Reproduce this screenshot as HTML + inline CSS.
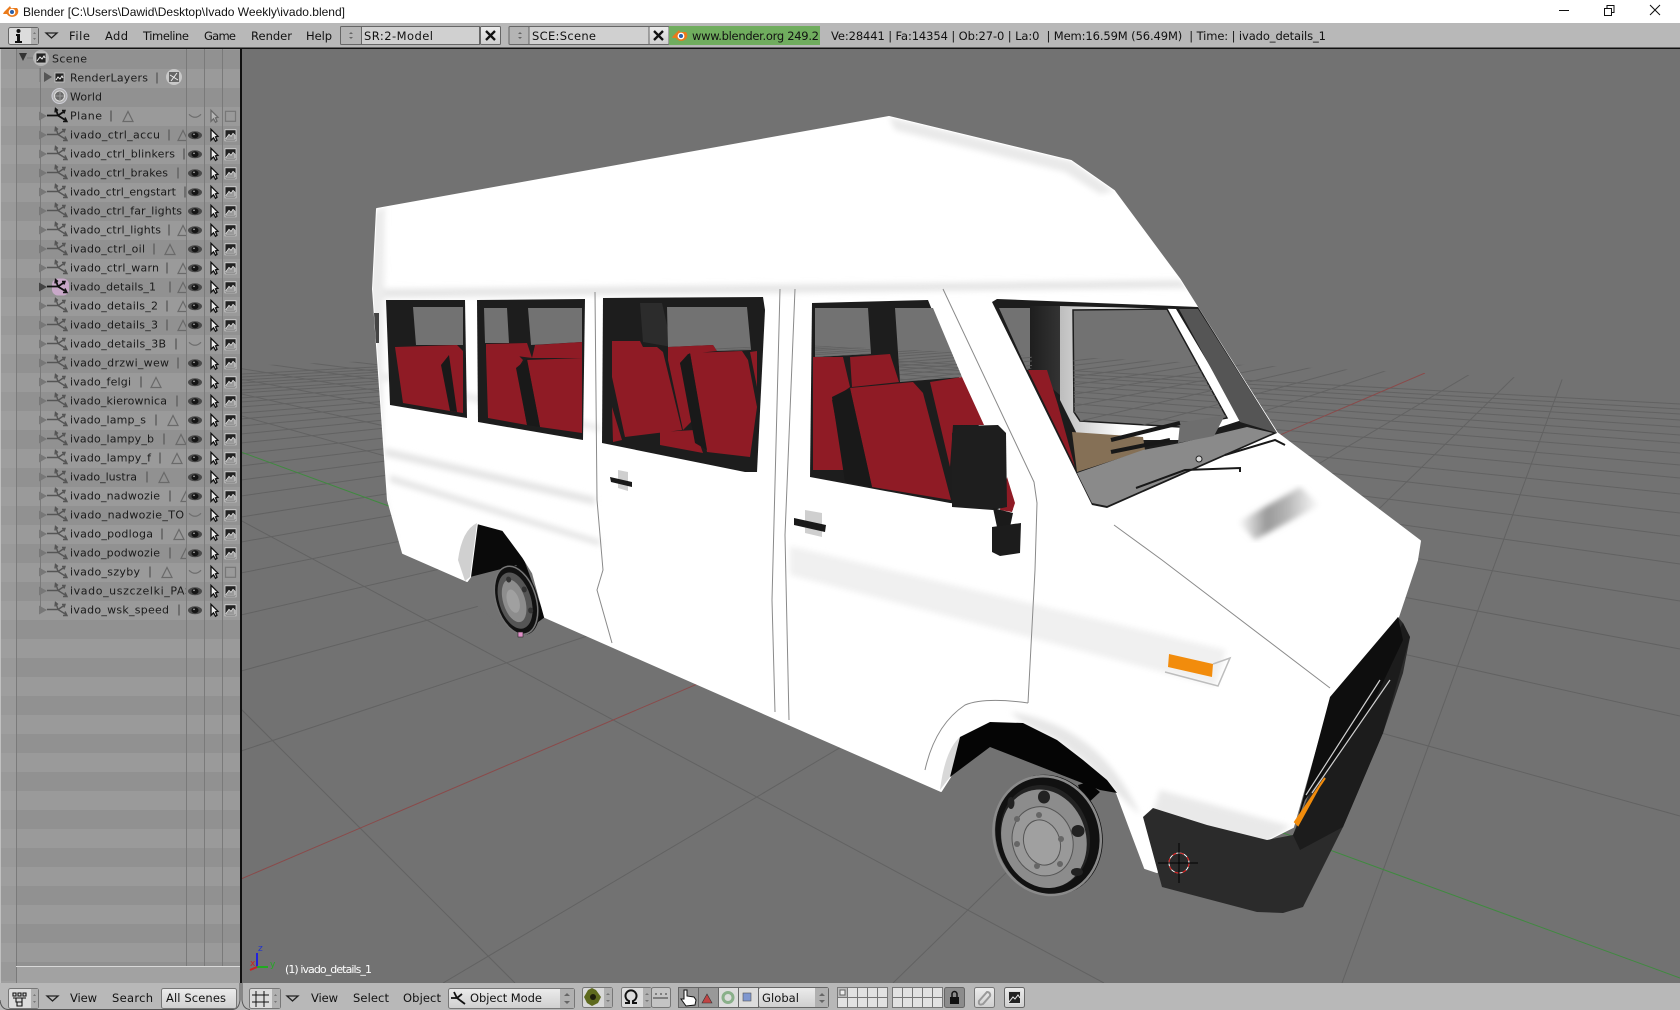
<!DOCTYPE html>
<html><head><meta charset="utf-8"><title>Blender</title>
<style>
html,body{margin:0;padding:0;background:#727272;width:1680px;height:1010px;overflow:hidden}
svg{display:block}
text{font-family:"DejaVu Sans","Liberation Sans",sans-serif;font-size:11px;fill:#111;white-space:pre}
.n text{fill:#1a1a1a}
.h text{font-size:11.5px;fill:#111}
</style></head><body>
<svg xmlns="http://www.w3.org/2000/svg" width="1680" height="1010" viewBox="0 0 1680 1010">
<defs>
<clipPath id="vp"><rect x="242" y="49" width="1438" height="934"/></clipPath>
<clipPath id="floor"><path d="M241,366 L800,345 L1425,373 L1680,385 L1680,983 L241,983Z"/></clipPath>
<clipPath id="names"><rect x="0" y="50" width="186" height="600"/></clipPath>
<clipPath id="bodyc"><path d="M377,209 L889,117 L1071,161 L1114,191 L1180,280 L1197,307 L1277,433 L1420,541 L1417,560 L1398,617 L1330,697 L1293,827 L1267,840 L1207,825 L1153,808 L1143,817 L1157,872 L1145,868 L1130,828 L1117,793 L1083,760 L1057,740 L1023,723 L990,722 L960,737 L950,777 L941,791 L545,617 L533,573 L523,557 L503,530 L477,523 L470,577 L467,581 L403,553 L388,500 L373,289Z"/></clipPath>
<clipPath id="glass"><path d="M815,308 L868,308 L871,354 L815,357Z M895,308 L933,308 L962,377 L900,382Z M999,308 L1030,308 L1032,368 L1027,370Z M1073,310 L1167,309 L1227,418 L1180,427 L1080,421 L1074,412Z M667,307 L747,307 L751,350 L717,351 L713,345 L668,347Z"/></clipPath>
<filter id="b" x="-5%" y="-5%" width="110%" height="110%"><feGaussianBlur stdDeviation="3"/></filter>
<pattern id="rows" x="0" y="50" width="10" height="38" patternUnits="userSpaceOnUse"><rect width="10" height="19" fill="#919191"/><rect y="19" width="10" height="19" fill="#9a9a9a"/></pattern>
<linearGradient id="pil" x1="0" x2="1" y1="0" y2="0"><stop offset="0" stop-color="#1e1e1e"/><stop offset="1" stop-color="#333"/></linearGradient>
<linearGradient id="wall" x1="0" x2="1" y1="0" y2="0"><stop offset="0" stop-color="#bdbdbd"/><stop offset=".35" stop-color="#fff"/></linearGradient>
<linearGradient id="smear" x1="0" x2="1" y1="0" y2="0"><stop offset="0" stop-color="#fff"/><stop offset=".35" stop-color="#999"/><stop offset=".6" stop-color="#b5b5b5"/><stop offset="1" stop-color="#fff"/></linearGradient>
<linearGradient id="btn" x1="0" y1="0" x2="0" y2="1"><stop offset="0" stop-color="#ececec"/><stop offset="1" stop-color="#cfcfcf"/></linearGradient>
<g id="ob" fill="none" stroke="#555" stroke-width="1.400"><path d="M56,3 L58,9 L66,14 M58,9 L64,5 M58,9 H47"/><path d="M55,6 L55.500,2 L58,4 M62,4 L65,4 L64,7 M63,15 L67,15 L65,11"/></g>
<g id="ob2" fill="none" stroke="#111" stroke-width="1.800"><path d="M56,3 L58,9 L66,14 M58,9 L64,5 M58,9 H47"/><path d="M55,6 L55.500,2 L58,4 M62,4 L65,4 L64,7 M63,15 L67,15 L65,11" stroke-width="1.400"/></g>
<path id="exp" d="M39,5 L47,9.500 L39,14Z" fill="#777"/>
<g id="eye"><ellipse cx="195" cy="10" rx="7" ry="4" fill="#4a4a4a"/><ellipse cx="195" cy="10" rx="3.500" ry="3" fill="#151515"/><circle cx="194" cy="9" r=".8" fill="#bbb"/></g>
<path id="eyeoff" d="M189,8 Q195,14 201,8" fill="none" stroke="#6e6e6e" stroke-width="1.200"/>
<path id="cur" d="M211,4 L211,15 L213.500,12.500 L215.500,16 L217,15 L215.500,11.500 L218,11Z" fill="#eee" stroke="#111" stroke-width="1.300"/>
<g id="rnd"><rect x="225" y="4.500" width="11" height="11" fill="#222" stroke="#ddd" stroke-width=".8"/><path d="M226,13 L229,9 L231,11 L233,8 L235,10 V14 H226Z" fill="#999" stroke="#eee" stroke-width=".7"/></g>
<rect id="rndoff" x="225.500" y="5" width="10" height="10" fill="none" stroke="#777" stroke-width="1.200"/>
<path id="tri" d="M0,15 L5,5 L10,15Z" fill="none" stroke="#6a6a6a" stroke-width="1.200"/>
<g id="logo"><path d="M-7,1 L-1,-5 L0,-3 L6,-3 A6,5.500 0 1 1 -4,3 L-8,3Z" fill="#ea7a1a"/><circle cx="1" cy="1" r="3.400" fill="#fff"/><circle cx="1" cy="1" r="2" fill="#2a5fa8"/></g>
<g id="grid"><g clip-path="url(#floor)" stroke="#626262" stroke-width="1" fill="none">
<path d="M1342,983L1590,303M893,983L1590,303M443,983L1590,303M241,751L1590,303M241,671L1590,303M241,615L1590,303M241,573L1590,303M241,542L1590,303M241,517L1590,303M241,496L1590,303M241,480L1590,303M241,466L1590,303M241,454L1590,303M241,443L1590,303M241,434L1590,303M241,426L1590,303M241,419L1590,303M241,413L1590,303M241,407L1590,303M241,402L1590,303M241,398L1590,303M241,393L1590,303M241,390L1590,303M241,386L1590,303M241,383L1590,303M241,380L1590,303M241,377L1590,303M241,374L1590,303"/>
<path d="M-165,303L515,983M-165,303L1104,983M-165,303L1680,816M-165,303L1680,716M-165,303L1680,649M-165,303L1680,601M-165,303L1680,564M-165,303L1680,536M-165,303L1680,513M-165,303L1680,494M-165,303L1680,478M-165,303L1680,465M-165,303L1680,453M-165,303L1680,443M-165,303L1680,435M-165,303L1680,427M-165,303L1680,420M-165,303L1680,414M-165,303L1680,409M-165,303L1680,404"/>
<path d="M241,879L1425,373" stroke="#8a4a4a"/>
<path d="M241,452L1680,978" stroke="#3f8a3f"/>
</g></g>
</defs>

<!-- title bar -->
<rect width="1680" height="23" fill="#fff"/>
<use href="#logo" x="11" y="11"/>
<text x="23" y="16" textLength="322" style="font-family:'Liberation Sans',sans-serif;font-size:12px">Blender [C:\Users\Dawid\Desktop\Ivado Weekly\ivado.blend]</text>
<path d="M1559,10.500 H1569" stroke="#111"/>
<path d="M1604.500,8.500 H1611.500 V15.500 H1604.500Z M1607,8 V5.500 H1614 V12.500 H1612" fill="none" stroke="#111"/>
<path d="M1650,5 L1660,15 M1660,5 L1650,15" stroke="#111"/>

<!-- viewport -->
<rect x="241" y="49" width="1439" height="934" fill="#727272"/>
<g clip-path="url(#vp)"><use href="#grid"/></g>

<!-- rear wheel + arch -->
<path d="M477,523 L503,530 L523,557 L545,617 L530,628 L510,620 L490,590 L470,577Z" fill="#0a0a0a"/>
<path d="M470,577 L517,565 L497,590 L500,625 L470,600Z" fill="#727272"/>
<g transform="translate(517,600) rotate(-17)"><ellipse rx="21" ry="36" fill="#111"/><ellipse cx="-1" rx="20" ry="35" fill="none" stroke="#777" stroke-width="1.500"/><ellipse cx="-2" rx="16" ry="29" fill="#555"/><ellipse cx="-3" rx="11" ry="22" fill="#8d8d8d"/><ellipse cx="-4" rx="6" ry="12" fill="#a0a0a0"/><ellipse cx="-2" cy="-22" rx="2.500" ry="3" fill="#333"/><ellipse cx="10" cy="-8" rx="2.500" ry="3" fill="#333"/><ellipse cx="10" cy="14" rx="2.500" ry="3" fill="#333"/></g>
<rect x="518" y="632" width="5" height="5" fill="#e090c8" stroke="#222" stroke-width=".6"/>

<!-- van body -->
<path d="M377,209 L889,117 L1071,161 L1114,191 L1180,280 L1197,307 L1277,433 L1420,541 L1417,560 L1398,617 L1330,697 L1293,827 L1267,840 L1207,825 L1153,808 L1143,817 L1157,872 L1145,868 L1130,828 L1117,793 L1083,760 L1057,740 L1023,723 L990,722 L960,737 L950,777 L941,791 L545,617 L533,573 L523,557 L503,530 L477,523 L470,577 L467,581 L403,553 L388,500 L373,289Z" fill="#fff" stroke="#fff" stroke-width="2" stroke-linejoin="round"/>

<!-- soft shading -->
<g clip-path="url(#bodyc)"><g filter="url(#b)">
<path d="M889,117 L1071,161 L1114,191 L1100,194 L1065,172 L895,130Z" fill="#e9e9e9"/>
<path d="M373,289 L1180,280 L1190,288 L374,298Z" fill="#e6e6e6"/>
<path d="M373,370 L600,425 L600,432 L373,378Z" fill="#ececec"/>
<path d="M385,448 L595,497 L595,505 L385,456Z M390,475 L600,540 L600,546 L390,482Z" fill="#e4e4e4"/>
<path d="M790,546 L1226,650 L1216,686 L790,575Z" fill="#f0f0f0"/>
<path d="M1010,712 Q1100,725 1140,815 L1117,793 L1083,760 L1057,740 L1023,723Z" fill="#e6e6e6"/>
<path d="M1160,790 L1290,826 L1267,845 L1207,830 L1153,812Z" fill="#e9e9e9"/>
<path d="M365,220 L385,205 L382,480 L395,540 L372,500Z" fill="#ececec"/>
</g></g>

<!-- grey seam lines -->
<g fill="none" stroke="#8a8a8a" stroke-width="1">
<path d="M595,292 L597,500 L603,570 L597,590 L612,643"/>
<path d="M780,289 L772,600 L775,712"/>
<path d="M795,289 L785,535 L789,720"/>
<path d="M943,289 L1034,482 L1037,503 L1035,570 L1028,703"/>
<path d="M1028,703 Q985,697 965,705 Q935,725 925,770"/>
<path d="M1114,525 L1162,560 L1330,688"/>
</g>
<!-- arch strips -->
<path d="M477,523 Q462,530 458,560 L465,581 L470,577Z" fill="#d0d0d0"/>
<path d="M960,737 Q945,750 940,790 L950,777Z" fill="#d8d8d8"/>
<path d="M374,313 H379 V343 H376Z" fill="#444"/>
<!-- hood smear -->
<path d="M1238,522 L1300,487 L1320,505 L1255,540Z" fill="url(#smear)" filter="url(#b)"/>

<!-- window 1 -->
<path d="M386,300 L465,300 L467,418 L390,405Z" fill="#1d1d1d"/>
<path d="M413,307 L463,307 L463,345 L416,345Z" fill="#727272"/>
<path d="M395,347 L457,345 L463,351 L463,413 L450,411 L403,403Z" fill="#8f1b25"/>
<path d="M441,365 L449,355 L457,412 L450,411Z" fill="#191919"/>
<!-- window 2 -->
<path d="M477,300 L585,299 L583,440 L478,422Z" fill="#1d1d1d"/>
<path d="M484,308 L507,308 L509,343 L485,343Z M528,308 L582,308 L582,342 L531,345Z" fill="#727272"/>
<path d="M486,344 L527,343 L532,358 L486,352Z M535,345 L582,342 L582,358 L532,358Z M486,352 L515,352 L523,360 L517,370 L527,425 L488,418Z M527,360 L582,358 L582,433 L540,427Z" fill="#8f1b25"/>
<path d="M516,368 L527,359 L540,427 L527,425Z" fill="#191919"/>
<!-- window 3 -->
<path d="M603,298 L763,297 L765,310 L757,472 L745,472 L602,443Z" fill="#1d1d1d"/>
<path d="M640,303 L662,303 L672,347 L643,342Z" fill="#2c2c2c"/>
<path d="M667,307 L747,307 L751,350 L717,351 L713,345 L668,347Z" fill="#727272"/>
<path d="M612,341 L640,341 L643,347 L657,347 L663,352 L682,430 L625,437 L612,377Z M612,407 L622,440 L613,442Z M668,347 L713,345 L717,351 L688,354 L680,363 L693,420 L683,430 L668,360Z M690,353 L742,351 L748,360 L757,407 L750,457 L707,452Z M750,352 L757,351 L757,387Z M660,432 L695,430 L703,453 L660,445Z" fill="#8f1b25"/>
<path d="M680,363 L690,353 L707,450 L695,443Z" fill="#191919"/>
<!-- window 4 -->
<path d="M812,303 L928,300 L1013,510 L950,503 L810,477Z" fill="#1d1d1d"/>
<path d="M815,308 L868,308 L871,354 L815,357Z M895,308 L933,308 L962,377 L900,382Z" fill="#727272"/>
<path d="M813,357 L843,357 L850,387 L832,400 L845,470 L813,470Z M850,357 L890,354 L899,382 L852,387Z M850,388 L913,382 L923,393 L951,500 L872,487Z M930,382 L962,377 L984,425 L953,425 L950,467Z" fill="#8f1b25"/>
<path d="M832,397 L850,388 L872,487 L845,482Z" fill="#191919"/>
<!-- mirror -->
<path d="M1007,477 L1015,503 L1012,512 L1000,510Z" fill="#8f1b25"/>
<path d="M952,433 L960,426 L998,425 L1006,433 L1007,507 L993,510 L952,507Z" fill="#1e1e1e"/>
<path d="M993,508 L1013,513 L1010,527 L997,527Z" fill="#1a1a1a"/>
<path d="M992,527 L1021,523 L1020,553 L1000,556 L992,552Z" fill="#1c1c1c"/>
<!-- handles -->
<path d="M805,510 L822,513 L822,537 L805,533Z M618,470 L628,472 L628,491 L618,488Z" fill="#cfcfcf"/>
<path d="M794,518 L826,525 L825,532 L794,525Z M610,477 L632,482 L632,487 L611,482Z" fill="#1a1a1a"/>

<!-- windshield -->
<path d="M992,302 L997,299 L1198,307 L1277,433 L1107,508 L1092,505Z" fill="#1c1c1c"/>
<path d="M999,308 L1030,308 L1032,368 L1027,370Z" fill="#727272"/>
<path d="M1030,306 L1060,306 L1060,395 L1030,370Z" fill="url(#pil)"/>
<path d="M1060,306 L1176,309 L1242,420 L1180,440 L1080,440 L1060,400Z" fill="url(#wall)"/>
<path d="M1073,310 L1167,309 L1227,418 L1180,427 L1080,421 L1074,412Z" fill="#727272" stroke="#1c1c1c" stroke-width="1.500"/>
<path d="M1179,309 L1198,309 L1277,433 L1240,422Z" fill="#555"/>
<g clip-path="url(#glass)"><use href="#grid"/></g>
<path d="M1028,370 L1047,370 L1058,405 L1075,467Z" fill="#8f1b25"/>
<path d="M1072,432 L1143,437 L1145,450 L1077,472Z" fill="#857056"/>
<path d="M1077,473 L1143,450 L1180,443 L1247,427 L1273,433 L1107,506 L1092,503Z" fill="#8a8a8a"/>
<path d="M1180,423 L1225,415 L1214,436 L1178,443Z" fill="#6e6e6e"/>
<path d="M1111,440 L1180,423 M1111,452 L1170,440" stroke="#181818" stroke-width="4" fill="none"/>
<path d="M1136,488 L1185,470 L1240,468 L1240,472 M1225,455 L1275,440 L1285,445" stroke="#181818" stroke-width="2" fill="none"/>
<circle cx="1199" cy="459" r="3" fill="#ddd" stroke="#222"/>

<!-- orange lamp -->
<path d="M1169,654 L1213,664 L1212,677 L1168,667Z" fill="#f28c0c"/>
<path d="M1213,664 L1230,658 L1218,686 L1165,672" fill="none" stroke="#bdbdbd" stroke-width="1.500"/>

<!-- bumper + grille -->
<path d="M1143,817 L1153,808 L1207,825 L1267,840 L1293,835 L1330,740 L1398,617 L1403,623 L1410,637 L1403,673 L1383,733 L1343,827 L1303,907 L1283,913 L1257,912 L1162,887Z" fill="#2b2b2b"/>
<path d="M1293,835 L1300,850 L1343,827 L1383,733 L1410,637 L1403,623 L1380,660Z" fill="#1c1c1c"/>
<path d="M1330,697 L1398,617 L1403,640 L1370,710 L1305,800 L1296,825Z" fill="#0e0e0e"/>
<path d="M1306,795 L1380,680 M1312,793 L1390,680" stroke="#d0d0d0" stroke-width="1.200" fill="none"/>
<path d="M1295,822 L1325,778 L1320,785 L1298,825Z" fill="#f28c0c" stroke="#f28c0c" stroke-width="2"/>

<!-- front wheel arch -->
<path d="M990,722 L1023,723 L1057,740 L1083,760 L1107,780 L1117,793 L1100,790 L990,747 L950,777 L960,737Z" fill="#050505"/>
<path d="M1078,785 L1088,782 L1100,792 L1085,806Z" fill="#050505"/>
<!-- front wheel -->
<g transform="translate(1049,835) rotate(-18)"><ellipse rx="53" ry="61" fill="#111"/><ellipse cx="-2" rx="53" ry="60" fill="none" stroke="#8a8a8a" stroke-width="2.500"/><ellipse cx="-4" rx="44" ry="52" fill="#222"/><ellipse cx="-6" cy="2" rx="42" ry="50" fill="#8c8c8c"/><ellipse cx="-8" cy="4" rx="30" ry="35" fill="#999" stroke="#555"/><ellipse cx="-9" cy="5" rx="18" ry="23" fill="#a0a0a0" stroke="#555"/></g>
<g fill="#222"><ellipse cx="1011" cy="803" rx="3.500" ry="6"/><ellipse cx="1044" cy="797" rx="6" ry="6.500"/><ellipse cx="1078" cy="831" rx="6.500" ry="6"/><ellipse cx="1077" cy="872" rx="6" ry="4"/></g>
<g fill="#666"><circle cx="1017" cy="819" r="3"/><circle cx="1039" cy="815" r="3"/><circle cx="1061" cy="839" r="3"/><circle cx="1060" cy="864" r="3"/><circle cx="1037" cy="866" r="3"/><circle cx="1017" cy="844" r="3"/></g>

<!-- 3D cursor -->
<g fill="none"><circle cx="1179" cy="863" r="10" stroke="#fff" stroke-width="1"/><circle cx="1179" cy="863" r="10" stroke="#d11" stroke-width="1" stroke-dasharray="4 4"/><path d="M1158,863 H1198 M1179,843 V883" stroke="#000"/></g>

<!-- axis widget + info -->
<path d="M257,967 V953" stroke="#2222dd" stroke-width="2"/>
<path d="M257,967 H268" stroke="#22aa22" stroke-width="2"/>
<path d="M257,967 L250,970" stroke="#c22" stroke-width="2"/>
<text x="258" y="951" style="fill:#2233cc;font-size:9px">z</text>
<text x="270" y="967" style="fill:#22aa22;font-size:9px">y</text>
<text x="250" y="966" style="fill:#c22;font-size:9px">x</text>
<text x="285" y="973" textLength="87" style="fill:#fff">(1) ivado_details_1</text>

<!-- sidebar -->
<rect x="0" y="49" width="240" height="934" fill="url(#rows)"/>
<rect x="0" y="49" width="16" height="934" fill="#a4a4a4" opacity=".4"/>
<rect x="16" y="966" width="224" height="17" fill="#a2a2a2"/>
<path d="M0,49 V983" stroke="#c0c0c0" stroke-width="2"/>
<path d="M16.500,49 V983 M40.500,68 V610 M186.500,49 V966 M204.500,49 V966 M222.500,49 V966" stroke="#7a7a7a" fill="none"/>
<path d="M16,966.500 H240" stroke="#d8d8d8"/>
<rect x="240" y="49" width="2" height="934" fill="#111"/>

<!-- outliner content -->
<g class="n" clip-path="url(#names)"><g transform="translate(0,-.5)">
<text x="52" y="63" textLength="35">Scene</text>
<text x="70" y="82" textLength="78">RenderLayers</text>
<text x="70" y="101" textLength="32">World</text>
<text x="70" y="120" textLength="32">Plane</text>
<text x="70" y="139" textLength="90">ivado_ctrl_accu</text>
<text x="70" y="158" textLength="105">ivado_ctrl_blinkers</text>
<text x="70" y="177" textLength="98">ivado_ctrl_brakes</text>
<text x="70" y="196" textLength="106">ivado_ctrl_engstart</text>
<text x="70" y="215" textLength="112">ivado_ctrl_far_lights</text>
<text x="70" y="234" textLength="91">ivado_ctrl_lights</text>
<text x="70" y="253" textLength="75">ivado_ctrl_oil</text>
<text x="70" y="272" textLength="89">ivado_ctrl_warn</text>
<text x="70" y="291" textLength="86">ivado_details_1</text>
<text x="70" y="310" textLength="88">ivado_details_2</text>
<text x="70" y="329" textLength="88">ivado_details_3</text>
<text x="70" y="348" textLength="96">ivado_details_3B</text>
<text x="70" y="367" textLength="99">ivado_drzwi_wew</text>
<text x="70" y="386" textLength="61">ivado_felgi</text>
<text x="70" y="405" textLength="97">ivado_kierownica</text>
<text x="70" y="424" textLength="76">ivado_lamp_s</text>
<text x="70" y="443" textLength="84">ivado_lampy_b</text>
<text x="70" y="462" textLength="81">ivado_lampy_f</text>
<text x="70" y="481" textLength="67">ivado_lustra</text>
<text x="70" y="500" textLength="90">ivado_nadwozie</text>
<text x="70" y="519" textLength="114">ivado_nadwozie_TO</text>
<text x="70" y="538" textLength="83">ivado_podloga</text>
<text x="70" y="557" textLength="90">ivado_podwozie</text>
<text x="70" y="576" textLength="70">ivado_szyby</text>
<text x="70" y="595" textLength="122">ivado_uszczelki_PAS</text>
<text x="70" y="614" textLength="99">ivado_wsk_speed</text>
<!-- separators -->
<g fill="#6f6f6f">
<rect x="156" y="73" width="2" height="11"/><rect x="110" y="111" width="2" height="11"/><rect x="168" y="130" width="2" height="11"/><rect x="183" y="149" width="2" height="11"/><rect x="177" y="168" width="2" height="11"/><rect x="184" y="187" width="2" height="11"/><rect x="168" y="225" width="2" height="11"/><rect x="153" y="244" width="2" height="11"/><rect x="166" y="263" width="2" height="11"/><rect x="169" y="282" width="2" height="11"/><rect x="166" y="301" width="2" height="11"/><rect x="166" y="320" width="2" height="11"/><rect x="175" y="339" width="2" height="11"/><rect x="177" y="358" width="2" height="11"/><rect x="140" y="377" width="2" height="11"/><rect x="176" y="396" width="2" height="11"/><rect x="155" y="415" width="2" height="11"/><rect x="163" y="434" width="2" height="11"/><rect x="159" y="453" width="2" height="11"/><rect x="146" y="472" width="2" height="11"/><rect x="169" y="491" width="2" height="11"/><rect x="161" y="529" width="2" height="11"/><rect x="169" y="548" width="2" height="11"/><rect x="149" y="567" width="2" height="11"/><rect x="178" y="605" width="2" height="11"/>
</g>
<use href="#tri" x="123" y="107"/><use href="#tri" x="178" y="126"/><use href="#tri" x="178" y="221"/><use href="#tri" x="165" y="240"/><use href="#tri" x="178" y="259"/><use href="#tri" x="178" y="278"/><use href="#tri" x="178" y="297"/><use href="#tri" x="178" y="316"/><use href="#tri" x="151" y="373"/><use href="#tri" x="168" y="411"/><use href="#tri" x="176" y="430"/><use href="#tri" x="172" y="449"/><use href="#tri" x="159" y="468"/><use href="#tri" x="181" y="487"/><use href="#tri" x="174" y="525"/><use href="#tri" x="181" y="544"/><use href="#tri" x="162" y="563"/>
</g></g>

<!-- scene / renderlayers / world icons -->
<path d="M19,53 L27,53 L23,61Z" fill="#333"/>
<path d="M27,58 H35 M40,68 V82" stroke="#777"/>
<circle cx="41" cy="58" r="8" fill="#b4b4b4"/>
<rect x="36" y="53" width="10" height="10" fill="#222" stroke="#ccc" stroke-width=".8"/>
<path d="M37,61 L40,57 L42,59 L44,56 L45,58" fill="none" stroke="#eee"/>
<path d="M44,72 L52,77 L44,82Z" fill="#555"/>
<rect x="55" y="73" width="9" height="9" fill="#222" stroke="#ccc" stroke-width=".8"/>
<path d="M56,80 L58,77 L60,79 L62,76 L63,78" fill="none" stroke="#eee"/>
<circle cx="174" cy="77" r="8" fill="#c8c8c8"/>
<rect x="169" y="72" width="10" height="10" fill="#666"/><path d="M170,75 L178,80 M177,73 L171,81" stroke="#eee"/>
<circle cx="59.500" cy="96" r="7.500" fill="#b0b0b0" stroke="#cfcfd8"/>
<circle cx="59.500" cy="96" r="5" fill="#6a6a6a" stroke="#ddd"/>
<path d="M55,96 H64 M60,91 V101" stroke="#999"/>

<!-- row object icons -->
<g transform="translate(0,-.5)">
<use href="#exp" y="107" style="fill:#444"/><use href="#ob2" y="107"/>
<use href="#exp" y="126"/><use href="#ob" y="126"/>
<use href="#exp" y="145"/><use href="#ob" y="145"/>
<use href="#exp" y="164"/><use href="#ob" y="164"/>
<use href="#exp" y="183"/><use href="#ob" y="183"/>
<use href="#exp" y="202"/><use href="#ob" y="202"/>
<use href="#exp" y="221"/><use href="#ob" y="221"/>
<use href="#exp" y="240"/><use href="#ob" y="240"/>
<use href="#exp" y="259"/><use href="#ob" y="259"/>
<path d="M39,283 L47,287.500 L39,292Z" fill="#444"/><rect x="52" y="279" width="17" height="17" rx="6" fill="#c8a8c8"/><use href="#ob2" y="278"/>
<use href="#exp" y="297"/><use href="#ob" y="297"/>
<use href="#exp" y="316"/><use href="#ob" y="316"/>
<use href="#exp" y="335"/><use href="#ob" y="335"/>
<use href="#exp" y="354"/><use href="#ob" y="354"/>
<use href="#exp" y="373"/><use href="#ob" y="373"/>
<use href="#exp" y="392"/><use href="#ob" y="392"/>
<use href="#exp" y="411"/><use href="#ob" y="411"/>
<use href="#exp" y="430"/><use href="#ob" y="430"/>
<use href="#exp" y="449"/><use href="#ob" y="449"/>
<use href="#exp" y="468"/><use href="#ob" y="468"/>
<use href="#exp" y="487"/><use href="#ob" y="487"/>
<use href="#exp" y="506"/><use href="#ob" y="506"/>
<use href="#exp" y="525"/><use href="#ob" y="525"/>
<use href="#exp" y="544"/><use href="#ob" y="544"/>
<use href="#exp" y="563"/><use href="#ob" y="563"/>
<use href="#exp" y="582"/><use href="#ob" y="582"/>
<use href="#exp" y="601"/><use href="#ob" y="601"/>
</g>

<!-- restrict columns -->
<g transform="translate(0,-.7)">
<use href="#eyeoff" y="107"/><g opacity=".35"><use href="#cur" y="107"/></g><use href="#rndoff" y="107"/>
<use href="#eye" y="126"/><use href="#cur" y="126"/><use href="#rnd" y="126"/>
<use href="#eye" y="145"/><use href="#cur" y="145"/><use href="#rnd" y="145"/>
<use href="#eye" y="164"/><use href="#cur" y="164"/><use href="#rnd" y="164"/>
<use href="#eye" y="183"/><use href="#cur" y="183"/><use href="#rnd" y="183"/>
<use href="#eye" y="202"/><use href="#cur" y="202"/><use href="#rnd" y="202"/>
<use href="#eye" y="221"/><use href="#cur" y="221"/><use href="#rnd" y="221"/>
<use href="#eye" y="240"/><use href="#cur" y="240"/><use href="#rnd" y="240"/>
<use href="#eye" y="259"/><use href="#cur" y="259"/><use href="#rnd" y="259"/>
<use href="#eye" y="278"/><use href="#cur" y="278"/><use href="#rnd" y="278"/>
<use href="#eye" y="297"/><use href="#cur" y="297"/><use href="#rnd" y="297"/>
<use href="#eye" y="316"/><use href="#cur" y="316"/><use href="#rnd" y="316"/>
<use href="#eyeoff" y="335"/><use href="#cur" y="335"/><use href="#rnd" y="335"/>
<use href="#eye" y="354"/><use href="#cur" y="354"/><use href="#rnd" y="354"/>
<use href="#eye" y="373"/><use href="#cur" y="373"/><use href="#rnd" y="373"/>
<use href="#eye" y="392"/><use href="#cur" y="392"/><use href="#rnd" y="392"/>
<use href="#eye" y="411"/><use href="#cur" y="411"/><use href="#rnd" y="411"/>
<use href="#eye" y="430"/><use href="#cur" y="430"/><use href="#rnd" y="430"/>
<use href="#eye" y="449"/><use href="#cur" y="449"/><use href="#rnd" y="449"/>
<use href="#eye" y="468"/><use href="#cur" y="468"/><use href="#rnd" y="468"/>
<use href="#eye" y="487"/><use href="#cur" y="487"/><use href="#rnd" y="487"/>
<use href="#eyeoff" y="506"/><use href="#cur" y="506"/><use href="#rnd" y="506"/>
<use href="#eye" y="525"/><use href="#cur" y="525"/><use href="#rnd" y="525"/>
<use href="#eye" y="544"/><use href="#cur" y="544"/><use href="#rnd" y="544"/>
<use href="#eyeoff" y="563"/><use href="#cur" y="563"/><use href="#rndoff" y="563"/>
<use href="#eye" y="582"/><use href="#cur" y="582"/><use href="#rnd" y="582"/>
<use href="#eye" y="601"/><use href="#cur" y="601"/><use href="#rnd" y="601"/>
</g>

<!-- top header -->
<rect x="0" y="23" width="1680" height="25" fill="#b8b8b8"/>
<rect x="0" y="47.500" width="1680" height="1.500" fill="#111"/>
<rect x="8.500" y="27.500" width="30" height="17" rx="2" fill="#dcdcdc" stroke="#666"/>
<rect x="31" y="28" width="7" height="16" fill="#b0b0b0"/>
<circle cx="18.500" cy="31" r="2" fill="#111"/><path d="M16,34 H20 V41 H22 V43 H15 V41 H17 V36 H16Z" fill="#111"/>
<path d="M33,34 L34.500,32 L36,34Z M33,38 L34.500,40 L36,38Z" fill="#777"/>
<path d="M46,33 L57,33 L51.500,38Z" fill="none" stroke="#222" stroke-width="1.300"/>
<g class="h">
<text x="69" y="40" textLength="21">File</text>
<text x="105" y="40" textLength="23">Add</text>
<text x="143" y="40" textLength="46">Timeline</text>
<text x="204" y="40" textLength="32">Game</text>
<text x="251" y="40" textLength="41">Render</text>
<text x="306" y="40" textLength="26">Help</text>
<rect x="340.500" y="26.500" width="21" height="18" rx="1" fill="#b4b4b4" stroke="#666"/>
<path d="M349,34 L351,32 L353,34Z M349,37 L351,39 L353,37Z" fill="#666"/>
<rect x="361.500" y="26.500" width="118" height="18" fill="#d0d0d0" stroke="#666"/>
<text x="364" y="40" textLength="69">SR:2-Model</text>
<rect x="480.500" y="26.500" width="20" height="18" rx="1" fill="url(#btn)" stroke="#666"/>
<path d="M486,31 L495,40 M495,31 L486,40" stroke="#111" stroke-width="2.300"/>
<rect x="509" y="26.500" width="20" height="18" rx="1" fill="#b4b4b4" stroke="#666"/>
<path d="M518,34 L520,32 L522,34Z M518,37 L520,39 L522,37Z" fill="#666"/>
<rect x="529" y="26.500" width="120" height="18" fill="#d0d0d0" stroke="#666"/>
<text x="532" y="40" textLength="64">SCE:Scene</text>
<rect x="649" y="26.500" width="20" height="18" rx="1" fill="url(#btn)" stroke="#666"/>
<path d="M654,31 L663,40 M663,31 L654,40" stroke="#111" stroke-width="2.300"/>
<rect x="669" y="26" width="151" height="19" fill="#70ad5e"/>
<use href="#logo" x="680" y="35"/>
<text x="692" y="40" textLength="127">www.blender.org 249.2</text>
<text x="831" y="40" textLength="495">Ve:28441 | Fa:14354 | Ob:27-0 | La:0  | Mem:16.59M (56.49M)  | Time: | ivado_details_1</text>
</g>

<!-- bottom header -->
<rect x="0" y="983" width="1680" height="27" fill="#b8b8b8"/>
<path d="M0,1000 Q1,1009 8,1009.500 H233 Q239,1009 240,1000 V983 M242,983 V1000 Q243,1009 250,1009.500" fill="none" stroke="#555"/>
<rect x="8.500" y="988.500" width="30" height="20" rx="2" fill="#dcdcdc" stroke="#777"/>
<rect x="31" y="989" width="7" height="19" fill="#b0b0b0"/>
<path d="M13,993 h3 v3 h-3Z M18,993 h3 v3 h-3Z M23,993 h3 v3 h-3Z M13,998 h13 M16,998 v4 h6 v-4 M17,1002 h5 v4 h-5Z" fill="none" stroke="#111" stroke-width="1.100"/>
<path d="M33,996 L34.500,994 L36,996Z M33,1001 L34.500,1003 L36,1001Z" fill="#777"/>
<path d="M47,996 L58,996 L52.500,1001Z" fill="none" stroke="#222" stroke-width="1.300"/>
<g class="h">
<text x="70" y="1002" textLength="27">View</text>
<text x="112" y="1002" textLength="41">Search</text>
<rect x="161.500" y="988.500" width="75" height="20" rx="2" fill="url(#btn)" stroke="#777"/>
<text x="166" y="1002" textLength="60">All Scenes</text>
<rect x="249.500" y="988.500" width="31" height="20" rx="2" fill="#dcdcdc" stroke="#777"/>
<rect x="272" y="989" width="8" height="19" fill="#b0b0b0"/>
<path d="M252,995 H269 M252,1002 H269 M256,991 V1007 M264,991 V1007" stroke="#111" stroke-width="1"/>
<path d="M274,996 L275.500,994 L277,996Z M274,1001 L275.500,1003 L277,1001Z" fill="#777"/>
<path d="M287,996 L298,996 L292.500,1001Z" fill="none" stroke="#222" stroke-width="1.300"/>
<text x="311" y="1002" textLength="27">View</text>
<text x="353" y="1002" textLength="36">Select</text>
<text x="403" y="1002" textLength="38">Object</text>
<rect x="448.500" y="988.500" width="126" height="20" rx="2" fill="url(#btn)" stroke="#777"/>
<rect x="560" y="989" width="14" height="19" fill="#b0b0b0"/>
<path d="M564,996 L567,993 L570,996Z M564,1001 L567,1004 L570,1001Z" fill="#666"/>
<path d="M454,992 L457,998 L465,1004 M457,998 L462,994 M457,998 H451" fill="none" stroke="#111" stroke-width="1.800"/>
<text x="470" y="1002" textLength="72">Object Mode</text>
<!-- shading button -->
<rect x="582.500" y="987.500" width="30" height="20" rx="2" fill="#d8d8d8" stroke="#777"/>
<rect x="604" y="988" width="8" height="19" fill="#b0b0b0"/>
<path d="M592,988 L596,990 L601,997 L598,1003 L592,1006 L587,1003 L584,997 L588,990Z" fill="#5e6a1e"/><circle cx="593" cy="997" r="3" fill="#1d1d0c"/>
<path d="M606,995 L608,993 L610,995Z M606,1000 L608,1002 L610,1000Z" fill="#777"/>
<!-- pivot -->
<rect x="621.500" y="987.500" width="30" height="20" rx="2" fill="#dcdcdc" stroke="#777"/>
<rect x="643" y="988" width="8" height="19" fill="#b0b0b0"/>
<path d="M625,1003 H629 V1001 A5.500,5.500 0 1 1 633,1001 V1003 H637" fill="none" stroke="#111" stroke-width="2"/>
<path d="M645,995 L647,993 L649,995Z M645,1000 L647,1002 L649,1000Z" fill="#777"/>
<rect x="651.500" y="987.500" width="19" height="20" rx="2" fill="#c4c4c4" stroke="#777"/>
<path d="M653,998 H668 M655,994 h2 M660,994 h2 M665,994 h2" stroke="#555" stroke-width="1.300"/>
<!-- manipulator group -->
<rect x="678.500" y="987.500" width="20" height="20" fill="#999" stroke="#666"/>
<rect x="698.500" y="987.500" width="20" height="20" fill="#999" stroke="#666"/>
<rect x="718.500" y="987.500" width="20" height="20" fill="#dcdcdc" stroke="#666"/>
<rect x="738.500" y="987.500" width="20" height="20" fill="#dcdcdc" stroke="#666"/>
<rect x="758.500" y="987.500" width="70" height="20" rx="2" fill="url(#btn)" stroke="#666"/>
<rect x="815" y="988" width="13" height="19" fill="#b0b0b0"/>
<path d="M684,990 L687,990 L687,996 L694,997 L696,1000 L695,1005 L686,1006 L681,999 L684,999Z" fill="#fff" stroke="#111"/>
<path d="M707,994 L712,1003 H702Z" fill="#c04444" stroke="#333" stroke-width=".6"/>
<circle cx="728" cy="997.500" r="5" fill="none" stroke="#8ab08a" stroke-width="3"/>
<rect x="743" y="993" width="8" height="8" fill="#7f97d0" stroke="#555" stroke-width=".6"/>
<text x="762" y="1002" textLength="37">Global</text>
<path d="M819,996 L822,993 L825,996Z M819,1000 L822,1003 L825,1000Z" fill="#666"/>
<!-- layers -->
<g fill="#e2e2e2" stroke="#777">
<rect x="837.500" y="987.500" width="10" height="10" fill="#bdbdbd"/><rect x="847.500" y="987.500" width="10" height="10"/><rect x="857.500" y="987.500" width="10" height="10"/><rect x="867.500" y="987.500" width="10" height="10"/><rect x="877.500" y="987.500" width="10" height="10"/>
<rect x="837.500" y="997.500" width="10" height="10"/><rect x="847.500" y="997.500" width="10" height="10"/><rect x="857.500" y="997.500" width="10" height="10"/><rect x="867.500" y="997.500" width="10" height="10"/><rect x="877.500" y="997.500" width="10" height="10"/>
<rect x="892.500" y="987.500" width="10" height="10"/><rect x="902.500" y="987.500" width="10" height="10"/><rect x="912.500" y="987.500" width="10" height="10"/><rect x="922.500" y="987.500" width="10" height="10"/><rect x="932.500" y="987.500" width="10" height="10"/>
<rect x="892.500" y="997.500" width="10" height="10"/><rect x="902.500" y="997.500" width="10" height="10"/><rect x="912.500" y="997.500" width="10" height="10"/><rect x="922.500" y="997.500" width="10" height="10"/><rect x="932.500" y="997.500" width="10" height="10"/>
</g>
<rect x="840" y="990" width="5" height="5" fill="#eee" stroke="#666"/>
<rect x="944.500" y="987.500" width="20" height="20" rx="2" fill="#8c8c8c" stroke="#666"/>
<rect x="950" y="997" width="9" height="7" fill="#111"/><path d="M952,997 V994 A2.500,2.500 0 0 1 957,994 V997" fill="none" stroke="#111" stroke-width="1.500"/>
<rect x="974.500" y="987.500" width="20" height="20" rx="2" fill="url(#btn)" stroke="#777"/>
<path d="M979,1001 L987,992 A3,3 0 0 1 990,996 L983,1004 Q978,1006 979,1001Z" fill="none" stroke="#999" stroke-width="2"/>
<rect x="1004.500" y="987.500" width="20" height="20" rx="2" fill="url(#btn)" stroke="#666"/>
<rect x="1008.500" y="991.500" width="12" height="12" fill="#222" stroke="#ddd"/>
<path d="M1009,1002 L1013,997 L1015,999 L1018,995 L1020,998" fill="none" stroke="#eee"/>
</g>
</svg>
</body></html>
